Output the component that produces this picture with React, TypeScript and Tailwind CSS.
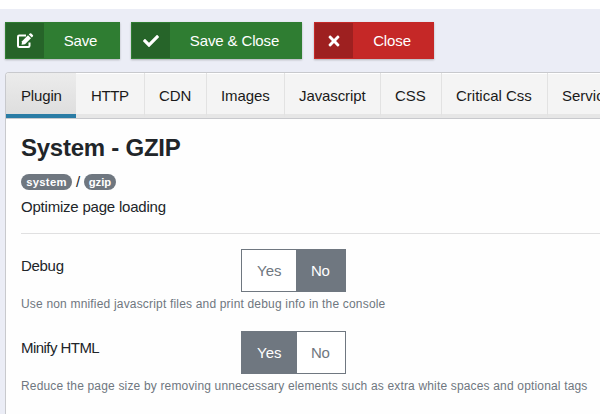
import type { ReactNode } from "react";
import { FaCheck, FaTimes } from "react-icons/fa";

type ActionProps = { label: string; icon: ReactNode; tone: string; iconTone: string };

function EditIcon() {
  return (
    <svg width="18" height="16" viewBox="0 0 18 16" fill="none">
      <path d="M10 2.5H3.2Q2 2.5 2 3.7V13Q2 14 3.2 14H12.3Q13.5 14 13.5 12.8V9.5" stroke="currentColor" strokeWidth="2" />
      <path d="M6 8.2L12 2.2L15 5.2L9 11.2L5.6 11.7Z" fill="currentColor" />
      <path d="M12.8 1.4L13.8 .5Q14.6 -.1 15.3 .6L16.8 2.1Q17.5 2.8 16.8 3.5L15.8 4.4Z" fill="currentColor" />
    </svg>
  );
}

function ActionButton({ label, icon, tone, iconTone }: ActionProps) {
  return (
    <button className={`flex h-[37px] border shadow-[0_1px_2px_rgba(0,0,0,0.25)] text-[15px] tracking-[-0.13px] text-white ${tone}`}>
      <span className={`flex h-[35px] w-[38px] shrink-0 items-center justify-center ${iconTone}`}>{icon}</span>
      <span className="flex h-[35px] flex-1 items-center justify-center whitespace-nowrap pr-[2px] pt-[2px]">{label}</span>
    </button>
  );
}

const tabs = [
  { label: "HTTP", width: "w-[69px]", inset: "pl-[15px] tracking-[-0.4px]" },
  { label: "CDN", width: "w-[62px]", inset: "pl-[14px] tracking-[-0.1px]" },
  { label: "Images", width: "w-[78px]", inset: "pl-[14px] tracking-[-0.1px]" },
  { label: "Javascript", width: "w-[96px]", inset: "pl-[14px] tracking-[-0.1px]" },
  { label: "CSS", width: "w-[61px]", inset: "pl-[14px]" },
  { label: "Critical Css", width: "w-[106px]", inset: "pl-[14px]" },
  { label: "Service Worker", width: "w-[140px]", inset: "pl-[14px]" },
];

function Toggle({ value }: { value: "yes" | "no" }) {
  const on = "bg-[#6f7780] text-white";
  const off = "bg-white text-[#6f7780]";
  return (
    <div className="flex h-[43px] w-[105px] border border-[#6f7780] text-[15px] leading-[42px]">
      <span className={`${value === "yes" ? "w-[55px]" : "w-[54px]"} pl-[15px] ${value === "yes" ? on : off}`}>Yes</span>
      <span className={`flex-1 ${value === "yes" ? "pl-[14px]" : "pl-[15px]"} tracking-[-0.3px] ${value === "no" ? on : off}`}>No</span>
    </div>
  );
}

type FieldProps = { label: string; help: string; value: "yes" | "no"; spacing: string; labelTracking: string; helpTracking: string };

function Field({ label, help, value, spacing, labelTracking, helpTracking }: FieldProps) {
  return (
    <div className={spacing}>
      <div className="flex">
        <div className={`w-[220px] pt-[5px] text-[15px] leading-6 ${labelTracking}`}>{label}</div>
        <Toggle value={value} />
      </div>
      <p className={`whitespace-nowrap pt-[3px] text-[12px] leading-[18px] text-[#6f7780] ${helpTracking}`}>{help}</p>
    </div>
  );
}

export default function App() {
  return (
    <div className="h-[414px] w-[600px] overflow-hidden bg-[#ebedf6] font-['Liberation_Sans',Arial,sans-serif] text-[#212529]">
      <div className="h-[9px] bg-white" />
      <div className="flex h-[63px] pl-[5px] pt-[13px]">
        <div className="grid w-[115px]">
          <ActionButton label="Save" icon={<EditIcon />} tone="border-[#2f7d32] bg-[#2f7d32]" iconTone="bg-[#266429]" />
        </div>
        <div className="ml-[11px] grid w-[171px]">
          <ActionButton label="Save & Close" icon={<FaCheck size={16} />} tone="border-[#2f7d32] bg-[#2f7d32]" iconTone="bg-[#266429]" />
        </div>
        <div className="ml-[12px] grid w-[120px]">
          <ActionButton label="Close" icon={<FaTimes size={16} />} tone="border-[#c52827] bg-[#c52827]" iconTone="bg-[#9e2020]" />
        </div>
      </div>
      <main className="ml-[5px] h-[342px] w-[620px] rounded-tl-[4px] border-l border-t border-[#c8c9cd] bg-[#fefefe]">
        <nav className="flex h-[46px] overflow-hidden rounded-tl-[3px] border-b border-[#c8c9cd] bg-[#f4f4f4] text-[15px] leading-[46px] text-[#1a1a1a]">
          <div className="h-[45px] w-[70px] shrink-0 border-b-4 border-[#2a7ca5] bg-linear-to-b from-[#ececec] to-[#dedede] pl-[15px] tracking-[-0.15px]">Plugin</div>
          {tabs.map((tab) => (
            <div
              key={tab.label}
              className={`h-[45px] shrink-0 whitespace-nowrap border-r border-r-[#e2e2e2] border-b-4 border-b-[#e6e6e6] shadow-[inset_0_1px_0_#ffffff] ${tab.width} ${tab.inset}`}
            >
              {tab.label}
            </div>
          ))}
        </nav>
        <section className="pl-[15px]">
          <h1 className="pt-[15px] text-[24px] font-bold leading-[28px] tracking-[-0.25px]">System - GZIP</h1>
          <div className="mt-[8px] flex h-[24px] items-center text-[15px]">
            <span className="flex h-[16px] w-[51px] items-center justify-center rounded-full bg-[#6f7780] text-[11.25px] font-bold tracking-[0.3px] text-white">system</span>
            <span className="w-[12px] text-center">/</span>
            <span className="flex h-[16px] w-[32px] items-center justify-center rounded-full bg-[#6f7780] text-[11.25px] font-bold text-white">gzip</span>
          </div>
          <p className="mt-[1px] text-[15px] leading-[24px] tracking-[-0.21px]">Optimize page loading</p>
          <hr className="mt-[14px] border-[#e0e0e1]" />
          <Field
            label="Debug"
            value="no"
            spacing="mt-[15px]"
            labelTracking="tracking-[-0.3px]"
            helpTracking="tracking-[0.18px]"
            help="Use non mnified javascript files and print debug info in the console"
          />
          <Field
            label="Minify HTML"
            value="yes"
            spacing="mt-[18px]"
            labelTracking="tracking-[-0.55px]"
            helpTracking="tracking-[0.165px]"
            help="Reduce the page size by removing unnecessary elements such as extra white spaces and optional tags"
          />
        </section>
      </main>
    </div>
  );
}
